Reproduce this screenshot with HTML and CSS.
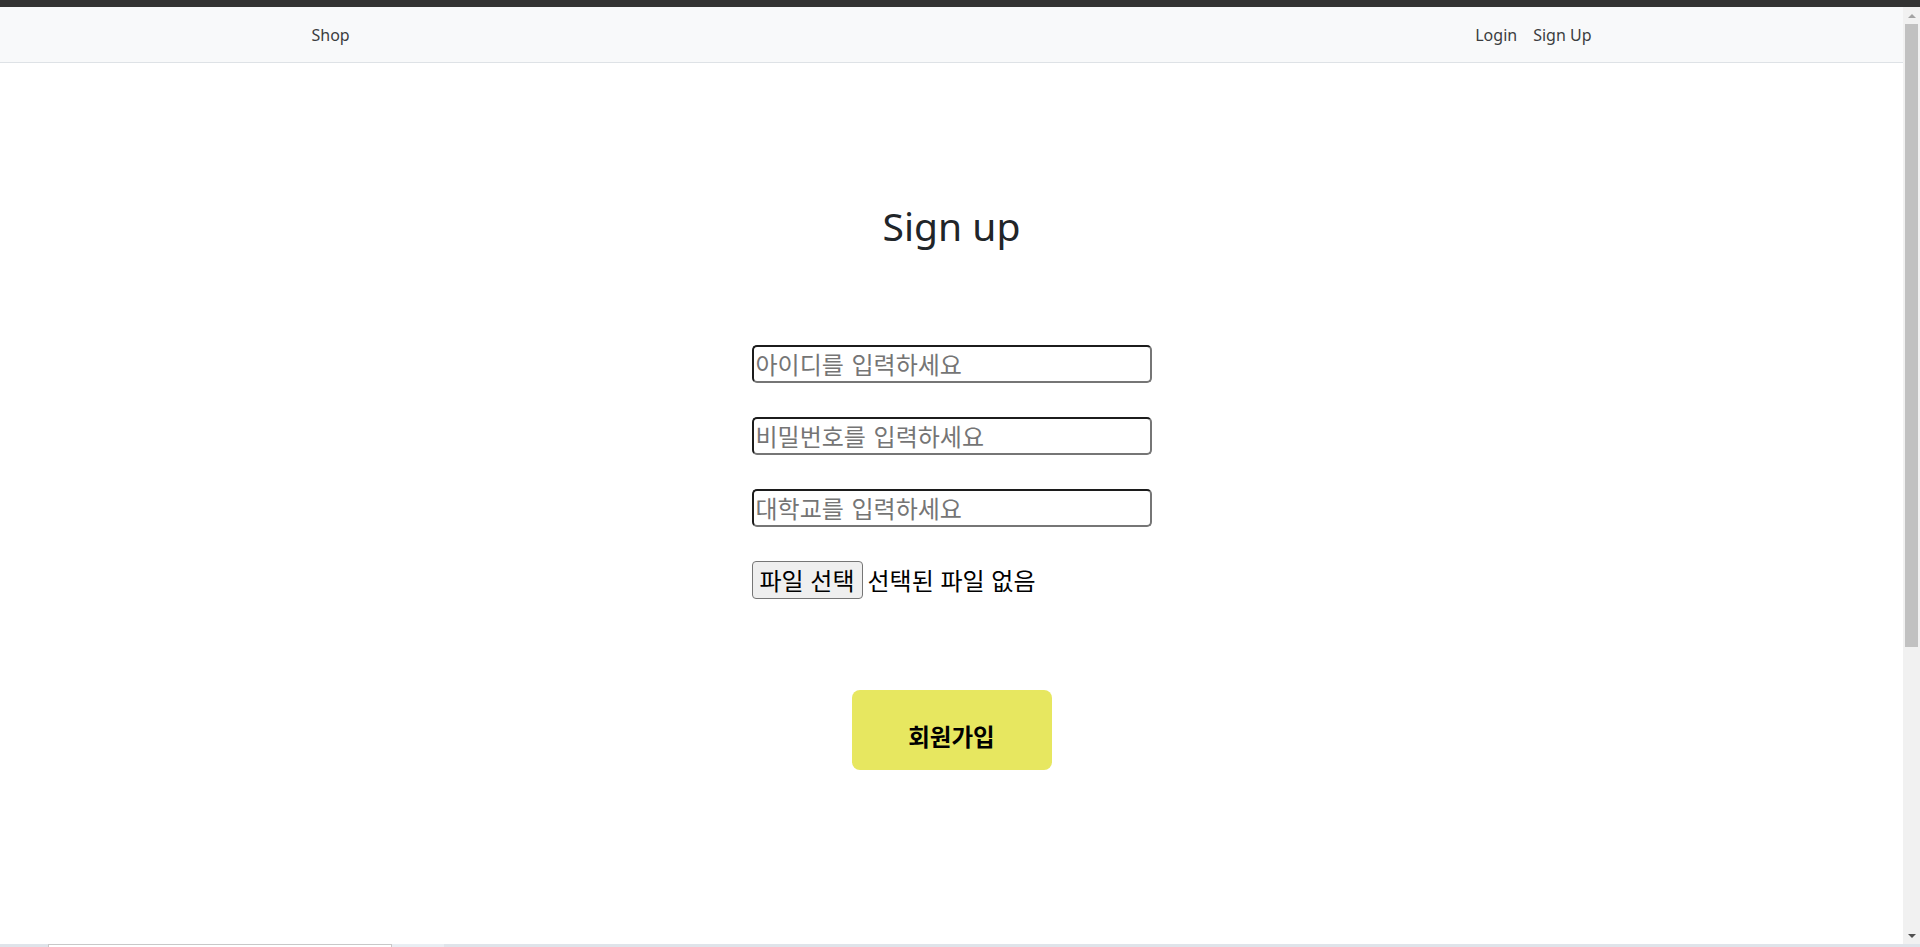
FILE: index.html
```html
<!DOCTYPE html>
<html lang="ko">
<head>
<meta charset="utf-8">
<title>Sign up</title>
<link rel="stylesheet" href="styles.css">
</head>
<body>
<div class="app">
  <div class="topbar"></div>
  <div class="frame">
    <div class="page">
      <nav class="navbar">
        <div class="nav-inner">
          <a class="nav-link" href="#">Shop</a>
          <div class="nav-right">
            <a class="nav-link" href="#">Login</a>
            <a class="nav-link" href="#">Sign Up</a>
          </div>
        </div>
      </nav>
      <main class="signup">
        <h1 class="title">Sign up</h1>
        <form class="form">
          <input class="field" type="text" placeholder="아이디를 입력하세요">
          <input class="field" type="password" placeholder="비밀번호를 입력하세요">
          <input class="field" type="text" placeholder="대학교를 입력하세요">
          <div class="file-row">
            <span class="file-btn">파일 선택</span>
            <span class="file-name">선택된 파일 없음</span>
          </div>
        </form>
        <button class="submit" type="button">회원가입</button>
      </main>
    </div>
    <div class="scrollbar">
      <div class="sb-btn"><span class="tri-up"></span></div>
      <div class="sb-track"><div class="sb-thumb"></div></div>
      <div class="sb-btn"><span class="tri-down"></span></div>
    </div>
  </div>
  <div class="bottombar">
    <div class="bb-a"></div>
    <div class="bb-tab"></div>
    <div class="bb-b"></div>
    <div class="bb-c"></div>
  </div>
</div>
</body>
</html>
```

FILE: styles.css
```css
* { box-sizing: border-box; }
html, body { margin: 0; padding: 0; overflow: hidden; }
body {
  font-family: "Noto Sans", "Noto Sans CJK KR", sans-serif;
  color: #212529;
  background: #ffffff;
}
.app {
  display: flex;
  flex-direction: column;
  width: 1920px;
  height: 947px;
}
.topbar {
  height: 7px;
  background: #333333;
  flex: none;
}
.frame {
  flex: 1;
  display: flex;
  min-height: 0;
}
.page {
  flex: 1;
  min-width: 0;
  overflow: hidden;
  background: #ffffff;
}
.navbar {
  height: 56px;
  background: #f8f9fa;
  border-bottom: 1px solid #dee2e6;
  display: flex;
  align-items: center;
  padding-top: 1px;
}
.nav-inner {
  width: 1320px;
  margin: 0 auto;
  padding: 0 12px;
  display: flex;
  justify-content: space-between;
  align-items: center;
}
.nav-right { display: flex; }
.nav-link {
  display: block;
  padding: 8px;
  font-size: 16px;
  line-height: 24px;
  color: #3b3d40;
  text-decoration: none;
}
.signup {
  display: flex;
  flex-direction: column;
  align-items: center;
}
.title {
  margin: 140px 0 0;
  font-size: 39px;
  line-height: 1.2;
  font-weight: 400;
  color: #212529;
}
.form {
  margin-top: 95px;
  width: 400px;
  display: flex;
  flex-direction: column;
  align-items: flex-start;
  gap: 34px;
}
.field {
  width: 400px;
  height: 38px;
  margin: 0;
  padding: 0 2px;
  border-width: 2px;
  border-style: solid;
  border-color: #1c1c1c #767676 #767676 #1c1c1c;
  border-radius: 5px;
  font-family: "Noto Sans CJK KR", sans-serif;
  font-size: 24px;
  word-spacing: 1px;
  color: #000;
  background: #fff;
  outline: none;
}
.field::placeholder { color: #757575; }
.file-row {
  display: flex;
  align-items: center;
  height: 38px;
  font-family: "Noto Sans CJK KR", sans-serif;
  font-size: 24px;
  color: #000;
}
.file-btn {
  width: 111px;
  height: 38px;
  display: flex;
  align-items: center;
  justify-content: center;
  background: #efefef;
  border: 1px solid #767676;
  border-radius: 4px;
}
.file-name { margin-left: 5px; }
.submit {
  margin-top: 91px;
  width: 200px;
  height: 80px;
  padding: 12px 0 0;
  border: none;
  border-radius: 8px;
  background: #e7e760;
  color: #000;
  font-family: "Noto Sans CJK KR", sans-serif;
  font-size: 23.5px;
  font-weight: 700;
}
.scrollbar {
  width: 17px;
  flex: none;
  background: #f1f1f1;
  display: flex;
  flex-direction: column;
}
.sb-btn {
  height: 17px;
  flex: none;
  display: flex;
  align-items: center;
  justify-content: center;
}
.tri-up, .tri-down {
  width: 0; height: 0;
  border-left: 4px solid transparent;
  border-right: 4px solid transparent;
}
.tri-up { border-bottom: 4px solid #a3a3a3; }
.tri-down { border-top: 4px solid #505050; }
.sb-track {
  flex: 1;
  padding: 0 2px;
}
.sb-thumb {
  height: 623px;
  background: #c1c1c1;
}
.bottombar {
  height: 3px;
  flex: none;
  display: flex;
  background: #dfe4ea;
}
.bb-a { width: 48px; }
.bb-tab {
  width: 344px;
  background: #ffffff;
  border: 1px solid #c8c8c8;
  border-bottom: none;
}
.bb-b { width: 52px; background: #e9eef3; }
.bb-c { flex: 1; }
```
